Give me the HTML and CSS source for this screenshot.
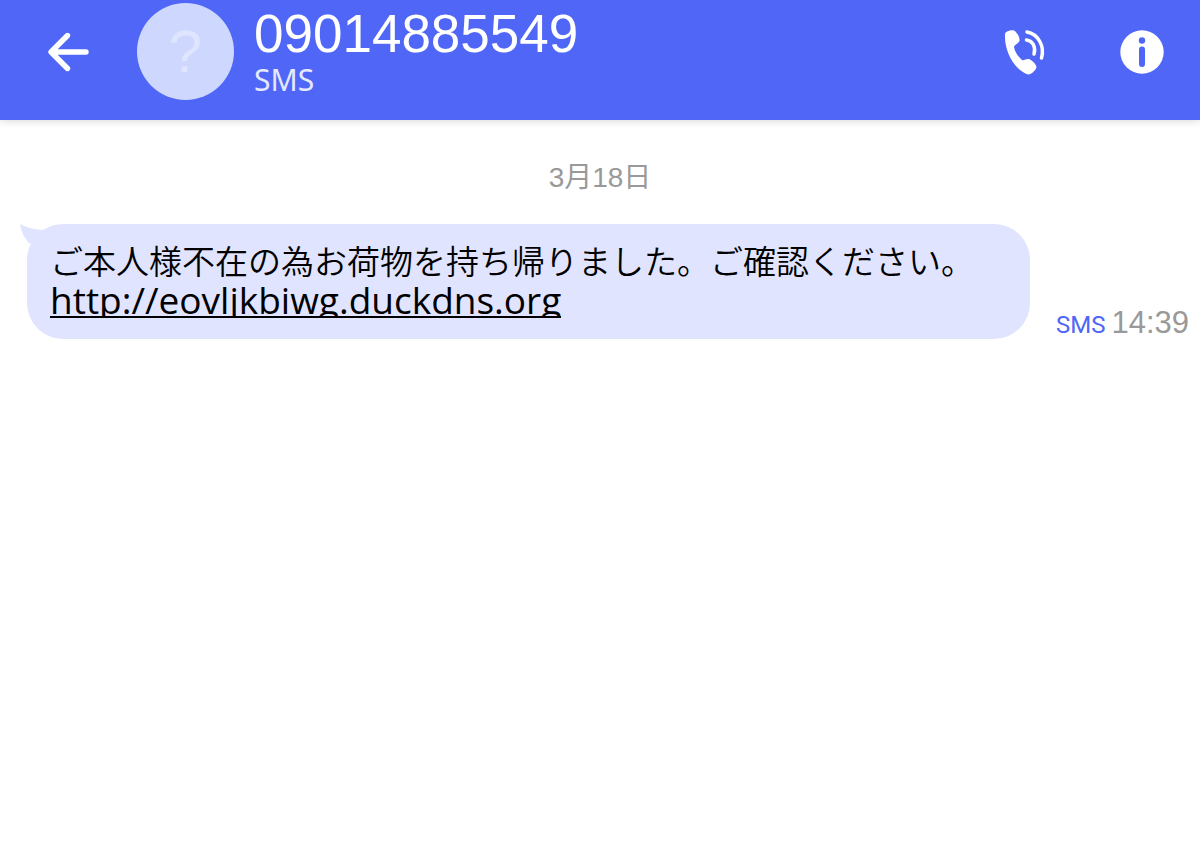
FILE: index.html
```html
<!DOCTYPE html>
<html lang="ja">
<head>
    <meta charset="UTF-8">
    <meta name="viewport" content="width=device-width, initial-scale=1.0">
    <title>09014885549</title>
    <link rel="stylesheet" href="styles.css">
</head>
<body>
    <!-- ヘッダー -->
    <header class="header">
        <button type="button" class="icon-button" aria-label="戻る">
            <svg width="44" height="44" viewBox="0 0 44 44">
                <path d="M21.5 5.5L5 22L21.5 38.5M6 22H40" fill="none" stroke="#fff" stroke-width="5.4" stroke-linecap="round" stroke-linejoin="round"/>
            </svg>
        </button>
        <div class="avatar">?</div>
        <div class="contact">
            <h1 class="number">09014885549</h1>
            <div class="service">SMS</div>
        </div>
        <div class="actions">
            <button type="button" class="icon-button" aria-label="電話">
                <svg width="44" height="48" viewBox="0 0 44 48">
                    <path d="M3 6C3 3 11 1 13 3C16 6 18 10 17.5 13C16 16 12 17 12 19C13 25 17 29 20 32C22 33 25 30 28 31.5C31 33 34.5 37 34.5 39C34 42 29 47 26 46.5C14 43 2 25 3 6Z" fill="#fff"/>
                    <path d="M24.5 12C31 13 34 19 32 26M25 4C36 6 43 18 39.5 30" fill="none" stroke="#fff" stroke-width="3.5" stroke-linecap="round"/>
                </svg>
            </button>
            <button type="button" class="icon-button" aria-label="情報">
                <svg width="44" height="44" viewBox="0 0 44 44">
                    <circle cx="22" cy="22" r="21.7" fill="#fff"/>
                    <circle cx="22" cy="10.5" r="3.2" fill="#4f66f7"/>
                    <path d="M22 19.5V34" stroke="#4f66f7" stroke-width="6" stroke-linecap="round"/>
                </svg>
            </button>
        </div>
    </header>

    <!-- メッセージ -->
    <main class="messages">
        <div class="date">3月18日</div>
        <div class="message">
            <div class="bubble">
                <svg class="tail" width="36" height="24" viewBox="0 0 36 24">
                    <path d="M0 0C7 4 15 5 22 6L36 10L10 20C4 14 1 7 0 0Z" fill="#e0e4ff"/>
                </svg>
                <p class="text">ご本人様不在の為お荷物を持ち帰りました。ご確認ください。</p>
                <a class="link" href="#">http://eovljkbiwg.duckdns.org</a>
            </div>
            <div class="meta">
                <span class="type">SMS</span>
                <time class="time">14:39</time>
            </div>
        </div>
    </main>
</body>
</html>
```

FILE: styles.css
```css
* {
    box-sizing: border-box;
}

body {
    margin: 0;
    background: #fff;
    font-family: "Liberation Sans", "Noto Sans CJK JP", sans-serif;
}

.header {
    display: flex;
    align-items: center;
    padding: 3px 36px 20px 46px;
    background: #4f66f7;
    box-shadow: 0 1px 8px rgba(0, 0, 0, 0.16);
}

.icon-button {
    display: flex;
    padding: 0;
    border: 0;
    background: none;
    cursor: pointer;
}

.avatar {
    display: flex;
    align-items: center;
    justify-content: center;
    width: 97px;
    height: 97px;
    margin: 0 20px 0 47px;
    border-radius: 50%;
    background: #ced8ff;
    color: #dfe5ff;
    font-size: 60px;
}

.contact {
    flex: 1;
    color: #fff;
}

.number {
    margin: 0;
    font-size: 53px;
    font-weight: 400;
    line-height: 56px;
}

.service {
    font-family: "Noto Sans", sans-serif;
    font-size: 30px;
    line-height: 36px;
    color: #e5e9ff;
}

.actions {
    display: flex;
    align-items: center;
    gap: 74px;
}

.messages {
    padding: 36px 11px 36px 27px;
}

.date {
    margin-bottom: 24px;
    padding-right: 16px;
    text-align: center;
    font-size: 28px;
    line-height: 44px;
    color: #999;
}

.message {
    display: flex;
    align-items: flex-end;
    gap: 26px;
}

/* 吹き出し */
.bubble {
    position: relative;
    flex: 1;
    padding: 17px 24px 21px 23px;
    border-radius: 36px;
    background: #e0e4ff;
    color: #000;
    font-family: "Noto Sans CJK JP", sans-serif;
    font-size: 33px;
    font-weight: 350;
    line-height: 39px;
}

.tail {
    position: absolute;
    top: 0;
    left: -7px;
}

.text {
    margin: 0;
}

.link {
    display: block;
    width: fit-content;
    height: 38px;
    overflow: hidden; /* 下線の下は切り取る */
    color: inherit;
    font-family: "Open Sans", sans-serif;
    font-size: 37px;
    font-weight: 400;
    text-decoration: underline;
    text-decoration-thickness: 2px;
    text-underline-offset: 2px;
    text-decoration-skip-ink: none;
}

.meta {
    display: flex;
    align-items: baseline;
    gap: 6px;
    line-height: 28px;
}

.type {
    font-family: Roboto, sans-serif;
    font-size: 24px;
    color: #4f66f7;
}

.time {
    font-size: 31px;
    color: #999;
}
```
